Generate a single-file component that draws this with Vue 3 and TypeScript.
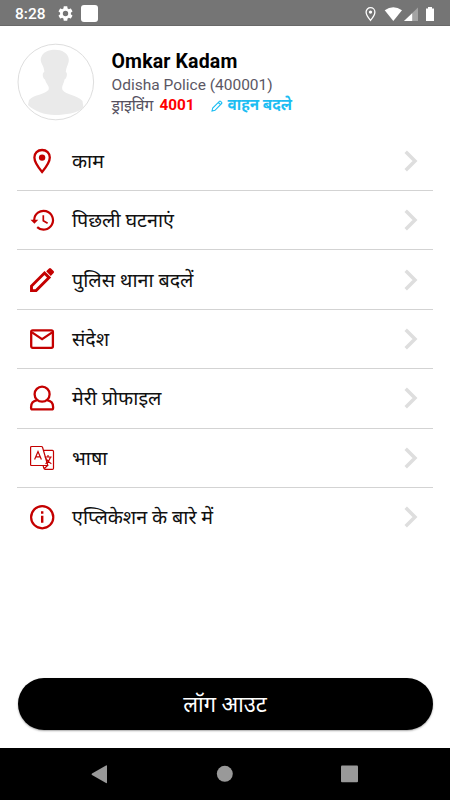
<script setup lang="ts">
interface MenuItem {
  icon: string
  label: string
}

const items: MenuItem[] = [
  { icon: 'pin', label: 'काम' },
  { icon: 'history', label: 'पिछली घटनाएं' },
  { icon: 'pencil', label: 'पुलिस थाना बदलें' },
  { icon: 'mail', label: 'संदेश' },
  { icon: 'user', label: 'मेरी प्रोफाइल' },
  { icon: 'language', label: 'भाषा' },
  { icon: 'info', label: 'एप्लिकेशन के बारे में' },
]
</script>

<template>
  <div class="screen">
    <header class="status">
      <span class="clock">8:28</span>
      <svg class="gear" viewBox="2 2 20 20"><path fill="#fff" d="M19.14 12.94c.04-.3.06-.61.06-.94s-.02-.64-.07-.94l2.03-1.58c.18-.14.23-.41.12-.61l-1.92-3.32c-.12-.22-.37-.29-.59-.22l-2.39.96c-.5-.38-1.03-.7-1.62-.94l-.36-2.54c-.04-.24-.24-.41-.48-.41h-3.84c-.24 0-.43.17-.47.41l-.36 2.54c-.59.24-1.13.57-1.62.94l-2.39-.96c-.22-.08-.47 0-.59.22L2.74 8.87c-.12.21-.08.47.12.61l2.03 1.58c-.05.3-.09.63-.09.94s.02.64.07.94l-2.03 1.58c-.18.14-.23.41-.12.61l1.92 3.32c.12.22.37.29.59.22l2.39-.96c.5.38 1.03.7 1.62.94l.36 2.54c.05.24.24.41.48.41h3.84c.24 0 .44-.17.47-.41l.36-2.54c.59-.24 1.13-.56 1.62-.94l2.39.96c.22.08.47 0 .59-.22l1.92-3.32c.12-.22.07-.47-.12-.61l-2.01-1.58zM12 15.6A3.6 3.6 0 1 1 12 8.4a3.6 3.6 0 0 1 0 7.2z" /></svg>
      <span class="app-badge"></span>
      <svg class="signals" width="72" height="20" viewBox="0 0 72 20">
        <path d="M5.5 1.7a4.4 4.4 0 0 0-4.4 4.4c0 3.3 4.4 8.3 4.4 8.3s4.400-5 4.400-8.300a4.400 4.400 0 0 0-4.400-4.400z" fill="none" stroke="#fff" stroke-width="1.3" />
        <circle cx="5.500" cy="6.100" r="1.700" fill="#fff" />
        <path d="M19.700 4.300Q28.300-2 37 4.300L28.300 15z" fill="#fff" />
        <path d="M53 1.600V15H39z" fill="#a3a3a3" />
        <path d="M47.200 7.200V15H39z" fill="#fff" />
        <path d="M63 1h4v1.500h2V15h-8V2.500h2z" fill="#fff" />
      </svg>
    </header>

    <section class="profile">
      <svg class="avatar" width="78" height="78" viewBox="0 0 78 78">
        <circle cx="38.800" cy="39" r="37.800" fill="#fff" stroke="#dedede" stroke-width="1" />
        <path fill="#eaeaea" d="M23.800 15.500C25.500 9 31.500 6.800 38 6.800S51.500 10 51.800 16.500C52 21 49.300 23 48.800 29C51 29.500 49.700 36 47.500 36.500C46.800 41 44.300 43 45.500 47C49.500 52 59 51.500 65.500 58L66.500 65C60 70 48.500 72 38 72S17 68 11 62L12 57C18 51 27 52 31.500 47C33 43 29 41 28 36.500C26 36 24.500 29.500 27.300 29C27.500 23 23 20 23.800 15.500z" />
      </svg>
      <div class="details">
        <div class="name">Omkar Kadam</div>
        <div class="org">Odisha Police (400001)</div>
        <div class="driving">
          <span class="mode">ड्राइविंग</span>
          <span class="number">4001</span>
          <svg class="edit" width="12" height="12" viewBox="0 0 12 12"><path d="M1 11l.7-3L8.400 1.300q.6-.5 1.200 0l1 1q.6.600 0 1.200L4 10.300zM7.300 2.500l2.200 2.200" fill="none" stroke="#1cbdf2" stroke-width="1.100" /></svg>
          <span class="change">वाहन बदले</span>
        </div>
      </div>
    </section>

    <nav class="menu">
      <div v-for="item in items" :key="item.icon" class="row">
        <svg class="icon" width="26" height="26" viewBox="0 0 26 26" fill="none" stroke="#c40000" stroke-width="2">
          <template v-if="item.icon === 'pin'">
            <path d="M13.100 2C8.600 2 5.400 5.200 5.400 9.500C5.400 14.800 13.100 23.900 13.100 23.900S20.800 14.800 20.800 9.500C20.800 5.200 17.600 2 13.100 2z" stroke-width="2.300" />
            <circle cx="13.100" cy="9.600" r="3.200" fill="#c40000" stroke="none" />
          </template>
          <template v-else-if="item.icon === 'history'">
            <path d="M5.200 14V13A9.400 9.400 0 1 1 8.200 20.100" stroke-width="2.200" />
            <path d="M1.500 12.700h7.800l-3.900 4z" fill="#c40000" stroke="none" />
            <path d="M14.300 8.200v5.500l4.300 2.500" stroke-width="1.700" />
          </template>
          <template v-else-if="item.icon === 'pencil'">
            <path d="M2.500 23.600V19L15.500 6l4.600 4.600L7.100 23.600z" stroke-width="2.900" />
            <path d="M17.200 4.300L20 1.500q1-1 2 0l2.600 2.600q1 1 0 2L21.800 8.900z" fill="#c40000" stroke="none" />
          </template>
          <template v-else-if="item.icon === 'mail'">
            <rect x="2.200" y="4.300" width="21.700" height="17.500" rx="1.500" stroke-width="2.300" />
            <path d="M3 6.300l10.100 6.800L23.200 6.300" stroke-width="2.200" />
          </template>
          <template v-else-if="item.icon === 'user'">
            <circle cx="13.100" cy="9.200" r="7.500" stroke-width="2.300" />
            <path d="M8.300 15.200C4 15.900 2.100 18.500 2.100 22v1q0 1.400 1.400 1.400h19.200q1.400 0 1.400-1.400v-1c0-3.500-1.900-6.100-6.200-6.800" stroke-width="2.300" />
          </template>
          <template v-else-if="item.icon === 'language'">
            <path d="M2.700 1.500h9.600q1 0 1.300 1l5.200 18H2.700q-1.100 0-1.100-1.100V2.600q0-1.100 1.100-1.100zM14.700 5.400h8.700q1.100 0 1.100 1.100v16.700q0 1.100-1.100 1.100h-7.200q-1.100 0-1.400-1.100l-.7-2.500M14.800 24l3.800-3.500" stroke-width="1.200" />
            <path d="M5.600 14.500L9 6.500l3.400 8M6.800 11.900h4.400" stroke-width="1.200" />
            <path d="M15.700 12h7M19 10v2M21.500 12.200q-1.200 4.500-5 6.500M17 13.500q2 3.700 5.400 5.300" stroke-width="1.200" />
          </template>
          <template v-else>
            <circle cx="13.200" cy="13.200" r="11.100" stroke-width="2.200" />
            <path d="M13.200 11.800v7M13.200 7.200v2.600" stroke-width="2.400" />
          </template>
        </svg>
        <span class="label">{{ item.label }}</span>
        <svg class="chevron" width="14" height="22" viewBox="0 0 14 22"><path d="M1.700 1.700L11 11L1.700 20.300" fill="none" stroke="#dedede" stroke-width="3.500" /></svg>
      </div>
    </nav>

    <button class="logout" type="button">लॉग आउट</button>

    <footer class="navbar">
      <svg width="450" height="52" viewBox="0 0 450 52" fill="#999">
        <path d="M106 17.400q1-.5 1 .5v16.600q0 1-1 .5L92 27q-1-.7 0-1.400z" />
        <circle cx="224.800" cy="25.800" r="8" />
        <rect x="341" y="17.500" width="17" height="16.700" rx="1" />
      </svg>
    </footer>
  </div>
</template>

<style>
body {
  margin: 0;
  background: #fff;
}
</style>

<style scoped>
.screen {
  box-sizing: border-box;
  width: 450px;
  height: 800px;
  display: flex;
  flex-direction: column;
  overflow: hidden;
  background: #fff;
  font-family: Roboto, "Noto Sans", sans-serif;
}
.status {
  height: 26px;
  flex: none;
  display: flex;
  align-items: center;
  box-sizing: border-box;
  padding: 0 13px 0 15px;
  background: #757575;
  border-bottom: 1px solid #696969;
}
.clock {
  width: 43px;
  color: #fff;
  font-size: 15.500px;
  font-weight: 500;
  line-height: 24px;
  padding-top: 2px;
}
.gear {
  width: 15px;
  height: 15px;
  margin-top: 1px;
}
.app-badge {
  width: 17px;
  height: 17px;
  margin: 1px 0 0 8px;
  border-radius: 3px;
  background: #fff;
}
.signals {
  margin: 6px 0 0 auto;
}
.profile {
  flex: none;
  height: 105.500px;
  box-sizing: border-box;
  display: flex;
  padding: 17px 0 0 17px;
}
.avatar {
  flex: none;
}
.details {
  padding: 7px 0 0 16.500px;
  white-space: nowrap;
}
.name {
  color: #000;
  font-size: 19.500px;
  font-weight: 700;
  line-height: 24px;
  letter-spacing: 0.150px;
}
.org {
  color: #5b5764;
  font-size: 15.500px;
  font-weight: 400;
  line-height: 22px;
}
.driving {
  display: flex;
  align-items: center;
  height: 19px;
  font-size: 15.700px;
  line-height: 19px;
}
.mode {
  width: 48px;
  color: #55515f;
  font-weight: 400;
}
.number {
  width: 51px;
  color: #f00;
  font-size: 15.300px;
  font-weight: 700;
}
.edit {
  margin-right: 5px;
}
.change {
  color: #1cbdf2;
  font-size: 15.200px;
  font-weight: 700;
}
.menu {
  flex: none;
  padding: 0 17.500px 0 17px;
}
.row {
  height: 59.430px;
  box-sizing: border-box;
  display: flex;
  align-items: center;
  padding: 0 15px 0 12px;
  border-bottom: 1px solid #d3d3d3;
}
.row:last-child {
  border-bottom-color: transparent;
}
.icon {
  flex: none;
}
.label {
  margin-left: 17px;
  padding-top: 2px;
  color: #111;
  font-size: 19.700px;
  line-height: 28px;
  white-space: nowrap;
}
.chevron {
  margin-left: auto;
}
.logout {
  flex: none;
  height: 52px;
  margin: auto 17.500px 18px;
  padding: 1px 0 0;
  border: 0;
  border-radius: 26px;
  background: #000;
  box-shadow: 0 1px 2px rgba(0, 0, 0, 0.35);
  color: #fff;
  font: 400 21.800px/52px Roboto, "Noto Sans", sans-serif;
}
.navbar {
  flex: none;
  height: 52px;
  background: #000;
}
.navbar svg {
  display: block;
}
</style>
